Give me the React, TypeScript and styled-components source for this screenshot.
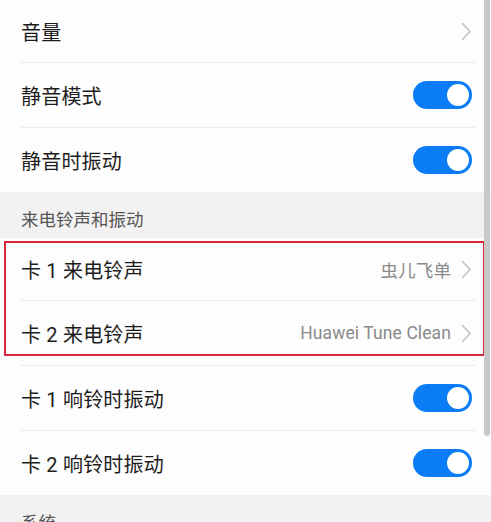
import React from "react";
import styled, { createGlobalStyle } from "styled-components";

const GlobalStyle = createGlobalStyle`
  html, body {
    margin: 0;
    padding: 0;
    background: #fdfdfd;
    font-family: Roboto, "Noto Sans CJK SC", sans-serif;
    -webkit-font-smoothing: antialiased;
  }
`;

const Screen = styled.div`
  position: relative;
  width: 491px;
  height: 522px;
  overflow: hidden;
  background: #fdfdfd;
`;

const List = styled.div`
  display: flex;
  flex-direction: column;
  padding-right: 8px;
`;

const Row = styled.div<{ $h?: number; $last?: boolean }>`
  display: flex;
  align-items: center;
  justify-content: space-between;
  height: ${({ $h }) => $h ?? 64}px;
  margin-left: 21px;
  margin-right: 8px;
  border-bottom: ${({ $last }) => ($last ? "none" : "1px solid #ebebeb")};
  box-sizing: content-box;
`;

const Label = styled.span`
  font-size: 20px;
  color: #1c1c1c;
  letter-spacing: 0.2px;
`;

const Right = styled.div`
  display: flex;
  align-items: center;
  gap: 10px;
  margin-right: 3px;
`;

const Value = styled.span`
  font-size: 17.5px;
  color: #8a8a8a;
  letter-spacing: 0.1px;
`;

const SectionHeader = styled.div`
  height: 46px;
  display: flex;
  align-items: center;
  padding-left: 21px;
  padding-top: 7px;
  box-sizing: border-box;
  background: #f2f2f2;
  font-size: 17.5px;
  color: #555;
  margin-right: -8px;
`;

const Highlight = styled.div`
  position: absolute;
  left: 4px;
  top: 241px;
  width: 477px;
  height: 111px;
  border: 2px solid #d8263a;
  pointer-events: none;
`;

const ScrollThumb = styled.div`
  position: absolute;
  right: 1px;
  top: 0;
  width: 6px;
  height: 436px;
  border-radius: 0 0 3px 3px;
  background: #c9c9c9;
`;

const Track = styled.div`
  width: 59px;
  height: 28px;
  border-radius: 14px;
  background: #0a7cf6;
  display: flex;
  align-items: center;
  justify-content: flex-end;
  padding: 0 3px;
  box-sizing: border-box;
  margin-right: 3px;
`;

const Knob = styled.div`
  width: 22px;
  height: 22px;
  border-radius: 50%;
  background: #fff;
`;

const Chevron = () => (
  <svg width="11" height="19" viewBox="0 0 11 19" fill="none">
    <path d="M1.5 1.5 L9 9.5 L1.5 17.5" stroke="#c2c2c2" strokeWidth="1.6" strokeLinecap="round" strokeLinejoin="round" />
  </svg>
);

const Toggle = () => (
  <Track>
    <Knob />
  </Track>
);

const App = () => {
  return (
    <Screen>
      <GlobalStyle />
      <List>
        <Row $h={62}>
          <Label>音量</Label>
          <Right>
            <Chevron />
          </Right>
        </Row>
        <Row>
          <Label>静音模式</Label>
          <Toggle />
        </Row>
        <Row $last>
          <Label>静音时振动</Label>
          <Toggle />
        </Row>
        <SectionHeader>来电铃声和振动</SectionHeader>
        <Row $h={62}>
          <Label>卡 1 来电铃声</Label>
          <Right>
            <Value>虫儿飞单</Value>
            <Chevron />
          </Right>
        </Row>
        <Row>
          <Label>卡 2 来电铃声</Label>
          <Right>
            <Value>Huawei Tune Clean</Value>
            <Chevron />
          </Right>
        </Row>
        <Row>
          <Label>卡 1 响铃时振动</Label>
          <Toggle />
        </Row>
        <Row $last>
          <Label>卡 2 响铃时振动</Label>
          <Toggle />
        </Row>
        <SectionHeader>系统</SectionHeader>
      </List>
      <Highlight />
      <ScrollThumb />
    </Screen>
  );
};

export default App;
